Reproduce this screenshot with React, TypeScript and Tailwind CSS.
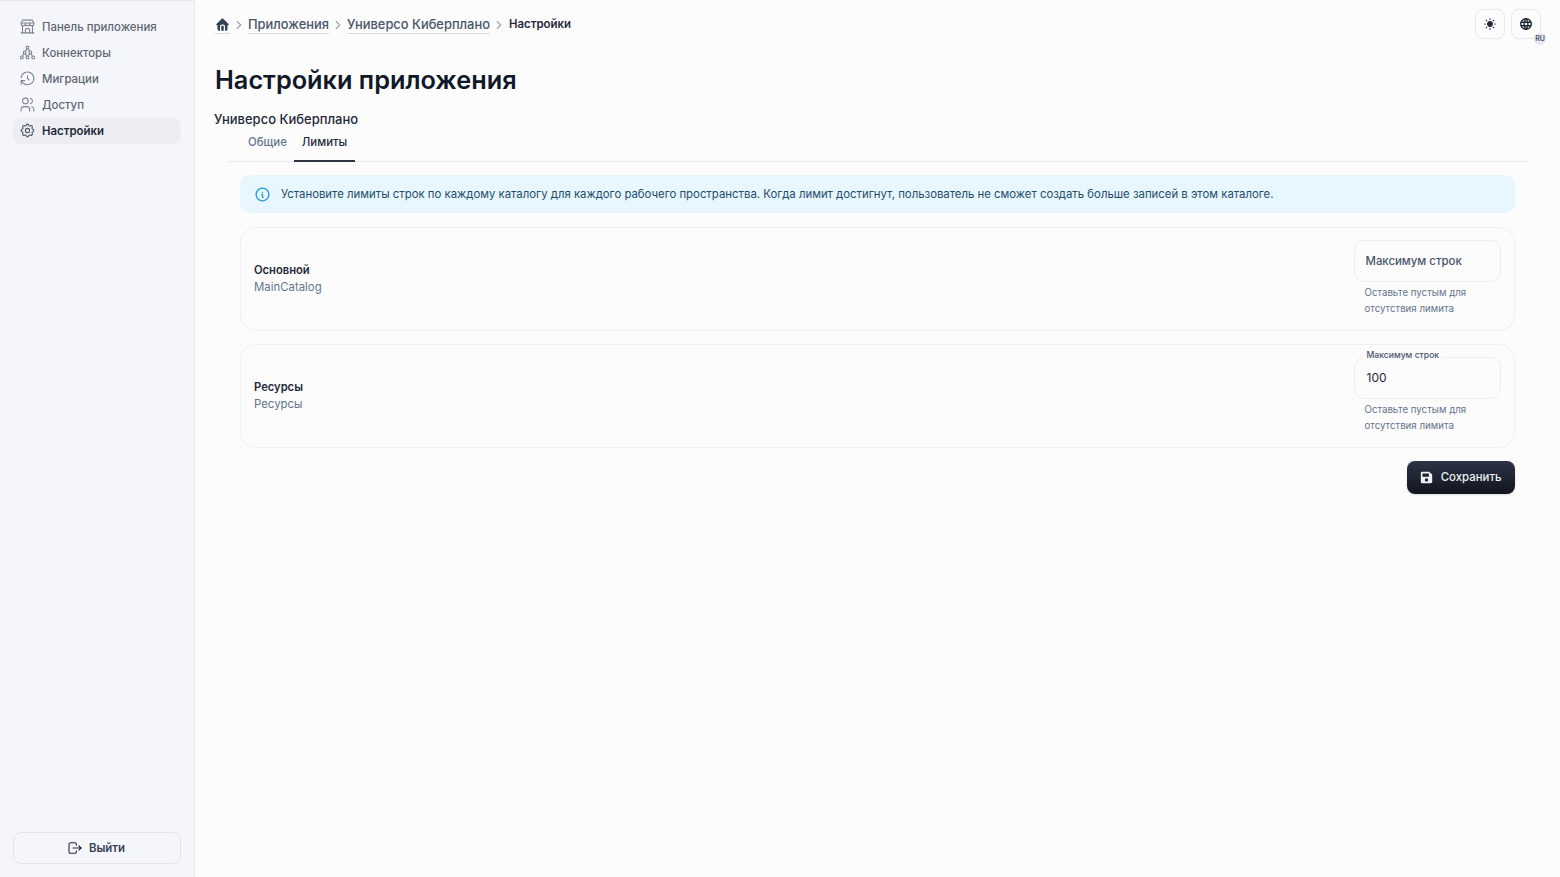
import { TbBuildingStore, TbHierarchy3, TbHistory, TbUsers, TbSettings, TbHomeFilled, TbChevronRight, TbSunFilled, TbWorld, TbInfoCircle, TbLogout } from 'react-icons/tb';
import { FaSave } from 'react-icons/fa';

const NAV = [
  { label: 'Панель приложения', icon: TbBuildingStore },
  { label: 'Коннекторы', icon: TbHierarchy3 },
  { label: 'Миграции', icon: TbHistory },
  { label: 'Доступ', icon: TbUsers },
  { label: 'Настройки', icon: TbSettings, active: true },
];

function Crumb({ children }: { children: string }) {
  return <a className="text-[12.9px] leading-[17px] font-medium text-[#4a5568] border-b border-[#d5d9e2]">{children}</a>;
}

function Sep() {
  return <TbChevronRight className="mx-[2px] text-[#a0a7b4]" size={14} />;
}

function CatalogCard({ name, code, value }: { name: string; code: string; value?: string }) {
  return (
    <div className="flex items-center justify-between h-[104px] rounded-2xl border border-[#eff0f4] px-[13px]">
      <div className="mt-px">
        <p className="text-[11.2px] leading-[17px] font-semibold text-[#1f2937]">{name}</p>
        <p className="text-[11.4px] leading-[17px] text-[#64748b]">{code}</p>
      </div>
      <div className="w-[147px] self-start mt-[12px]">
        <div className="relative h-[42px] rounded-[10px] border border-[#eceef3] flex items-center px-[11px]">
          {value ? (
            <>
              <span className="absolute left-[8px] -top-[9px] bg-[#fcfcfd] px-1 text-[8.6px] leading-[12px] font-medium text-[#475569]">Максимум строк</span>
              <span className="text-[12px] text-[#1f2937] pl-px">{value}</span>
            </>
          ) : (
            <span className="mt-px text-[11.4px] font-medium text-[#475569]">Максимум строк</span>
          )}
        </div>
        <p className="mt-[3px] pl-[11px] text-[9.7px] leading-[16px] text-[#64748b]">Оставьте пустым для отсутствия лимита</p>
      </div>
    </div>
  );
}

export default function App() {
  return (
    <div className="flex h-[877px] bg-[#fcfcfd] font-['Inter',sans-serif] overflow-hidden">
      <aside className="w-[195px] shrink-0 bg-[#f5f6fb] border-r border-t border-[#e6e8f0] flex flex-col justify-between p-[13px]">
        <nav>
          {NAV.map((n) => (
            <div
              key={n.label}
              className={`flex items-center gap-[6px] h-[26px] pl-[6px] rounded-lg text-[11.4px] ${
                n.active ? 'bg-[#eceef3] font-semibold text-[#1f2937]' : 'font-medium text-[#5f6672]'
              }`}
            >
              <n.icon size={17} strokeWidth={1.5} className={`mb-[2px] ${n.active ? 'text-[#4b5563]' : 'text-[#7d838e]'}`} />
              <span className="mt-[2px]">{n.label}</span>
            </div>
          ))}
        </nav>
        <button className="flex items-center justify-center gap-[6px] h-[32px] pr-[2px] rounded-lg border border-[#e2e4ec] text-[11.4px] font-semibold text-[#374151]">
          <TbLogout size={16} strokeWidth={1.6} className="text-[#1f2937]" />
          <span className="mt-[2px]">Выйти</span>
        </button>
      </aside>

      <main className="flex-1 min-w-0 pl-[19px] pr-[20px] pt-[9px]">
        <div className="flex items-center justify-between h-[30px]">
          <div className="flex items-center pl-px pt-[2px]">
            <span className="border-b border-[#d5d9e2] h-[17px] flex items-center">
              <TbHomeFilled size={15} className="text-[#334155]" />
            </span>
            <Sep />
            <Crumb>Приложения</Crumb>
            <Sep />
            <Crumb>Универсо Киберплано</Crumb>
            <Sep />
            <span className="text-[11.4px] font-semibold text-[#1f2937] pl-px">Настройки</span>
          </div>
          <div className="flex items-center gap-[6px] -mr-px">
            <button className="w-[30px] h-[30px] rounded-lg border border-[#e6e8f0] flex items-center justify-center">
              <TbSunFilled size={14} className="text-[#1f2937]" />
            </button>
            <button className="relative w-[30px] h-[30px] rounded-lg border border-[#e6e8f0] flex items-center justify-center">
              <TbWorld size={14} className="text-[#1f2937]" strokeWidth={2.4} />
              <span className="absolute -right-[6px] -bottom-[7px] w-[12px] h-[12px] rounded-full bg-[#e6e8f0] text-[7px] leading-[12px] font-semibold text-[#4b5563] text-center">RU</span>
            </button>
          </div>
        </div>

        <h1 className="mt-[23px] pl-px text-[25.3px] leading-[36px] font-semibold text-[#111827]">Настройки приложения</h1>
        <p className="mt-[12px] text-[13px] leading-[18px] font-medium text-[#1f2937]">Универсо Киберплано</p>

        <div className="ml-[14px] mr-[12px] flex h-[35px] -mt-[1px] pl-[13px] border-b border-[#e8e9ee]">
          <span className="px-[7px] pt-[7px] text-[11.4px] font-medium text-[#64748b]">Общие</span>
          <span className="px-[8px] pt-[7px] h-[35px] text-[11.4px] font-medium text-[#1f2937] border-b-2 border-[#2d3340]">Лимиты</span>
        </div>

        <div className="ml-[26px] mr-[25.5px] mt-[13px] flex flex-col gap-[13.3px]">
          <div className="flex items-center gap-[11px] h-[38.4px] rounded-[10px] bg-[#e8f6fd] pl-[14px]">
            <TbInfoCircle size={17} className="text-[#2b9fe0]" />
            <span className="mt-[1px] -ml-px text-[11.36px] text-[#1e4e6b]">Установите лимиты строк по каждому каталогу для каждого рабочего пространства. Когда лимит достигнут, пользователь не сможет создать больше записей в этом каталоге.</span>
          </div>
          <CatalogCard name="Основной" code="MainCatalog" />
          <CatalogCard name="Ресурсы" code="Ресурсы" value="100" />
          <div className="flex justify-end">
            <button className="flex items-center gap-[8px] h-[33px] px-[13px] rounded-lg bg-gradient-to-b from-[#2d3446] to-[#12151f] text-[11.4px] font-medium text-[#eef0f4] shadow-sm">
              <FaSave size={13} />
              <span>Сохранить</span>
            </button>
          </div>
        </div>
      </main>
    </div>
  );
}
